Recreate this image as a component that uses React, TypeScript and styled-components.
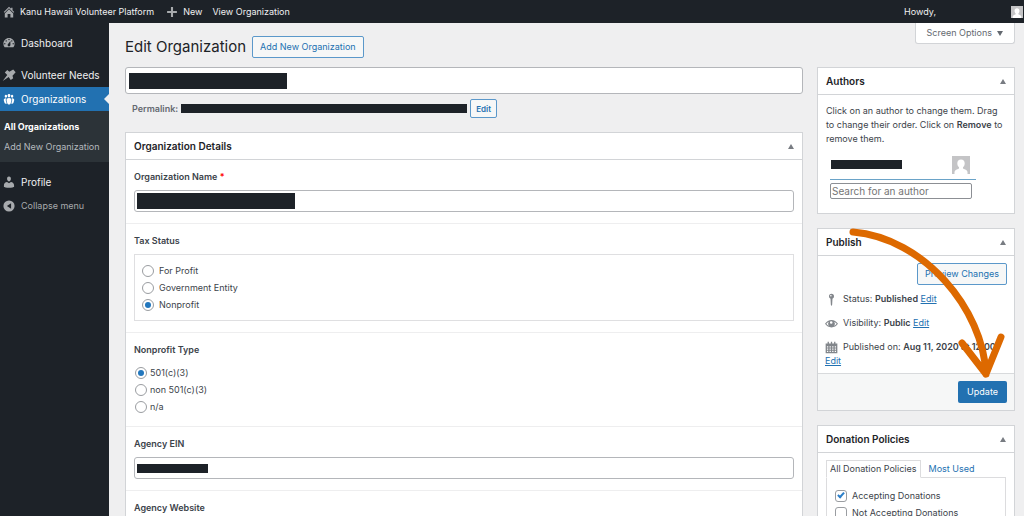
import React from "react";
import styled, { createGlobalStyle } from "styled-components";

const Global = createGlobalStyle`
  * { box-sizing: border-box; }
  html { scrollbar-width: none; }
  body {
    margin: 0;
    background: #efeff0;
    color: #3c434a;
    font: 10px/14px Inter, "Liberation Sans", sans-serif;
  }
  button, input { font: inherit; color: inherit; margin: 0; }
  h1, h2, h3, p, ul, fieldset { margin: 0; padding: 0; border: 0; }
  ul { list-style: none; }
  a { color: #2271b1; }
`;

const TopBar = styled.header`
  display: flex;
  align-items: center;
  height: 23px;
  padding: 0 1px 0 2px;
  background: #1d2228;
  color: #f0f0f1;
`;
const TopLink = styled.a<{ $gap?: number }>`
  display: flex;
  align-items: center;
  gap: 4px;
  margin-right: ${(p) => p.$gap ?? 0}px;
  color: inherit;
  font-size: 9px;
  text-decoration: none;
  svg { color: #a7aaad; }
`;
const Account = styled(TopLink)`
  margin-left: auto;
  gap: 75px;
`;
const Shell = styled.div`
  display: flex;
  min-height: calc(100vh - 23px);
`;
const Sidebar = styled.nav`
  flex: 0 0 109px;
  padding-top: 8px;
  background: #1d2228;
`;
const MenuItem = styled.a<{ $active?: boolean; $spaced?: boolean }>`
  position: relative;
  display: flex;
  align-items: center;
  gap: 5px;
  height: 24px;
  margin-top: ${(p) => (p.$spaced ? 8 : 0)}px;
  padding-left: 2px;
  background: ${(p) => (p.$active ? "#2271b1" : "transparent")};
  color: ${(p) => (p.$active ? "#fff" : "#f0f0f1")};
  text-decoration: none;
  white-space: nowrap;
  svg { color: ${(p) => (p.$active ? "#fff" : "#a7aaad")}; }
  &::after {
    content: "";
    display: ${(p) => (p.$active ? "block" : "none")};
    position: absolute;
    right: 0;
    top: 7px;
    border: 5px solid transparent;
    border-left: 0;
    border-right-color: #efeff0;
  }
`;
const Collapse = styled.button`
  display: flex;
  align-items: center;
  gap: 5px;
  height: 24px;
  padding: 0 0 0 2px;
  border: 0;
  background: none;
  color: #a7aaad;
  font-size: 9px;
`;
const SubMenu = styled.ul`
  padding: 6px 0 5px 4px;
  background: #2c3338;
`;
const SubLink = styled.a<{ $current?: boolean }>`
  display: block;
  color: ${(p) => (p.$current ? "#fff" : "#b4b9be")};
  font-size: 9px;
  font-weight: ${(p) => (p.$current ? 700 : 400)};
  line-height: 20px;
  text-decoration: none;
  white-space: nowrap;
`;
const Content = styled.main`
  flex: 1;
  min-width: 0;
  padding: 0 9px 0 16px;
`;
const PageHead = styled.div`
  display: flex;
  align-items: flex-start;
  height: 44px;
`;
const Title = styled.h1`
  margin: 14px 6px 0 0;
  color: #1d2327;
  font-size: 15px;
  font-weight: 400;
  line-height: 20px;
`;
const Outline = styled.button<{ $small?: boolean }>`
  height: ${(p) => (p.$small ? 19 : 22)}px;
  padding: 0 ${(p) => (p.$small ? 5 : 7)}px;
  border: 1px solid #5b98ca;
  border-radius: 2px;
  background: #f6f7f7;
  color: #2271b1;
  font-size: ${(p) => (p.$small ? 8 : 9)}px;
  line-height: 14px;
  white-space: nowrap;
`;
const HeadAction = styled(Outline)`
  margin-top: 13px;
`;
const ScreenOptions = styled.button`
  display: flex;
  align-items: center;
  gap: 5px;
  height: 21px;
  margin-left: auto;
  padding: 0 11px;
  border: 1px solid #d2d4d7;
  border-top: 0;
  border-radius: 0 0 3px 3px;
  background: #fff;
  color: #646970;
  font-size: 9px;
`;
const Columns = styled.div`
  display: grid;
  grid-template-columns: minmax(0, 1fr) 198px;
  gap: 14px;
  align-items: start;
`;
const Redaction = styled.span<{ $w: number; $h: number }>`
  display: block;
  width: ${(p) => p.$w}px;
  height: ${(p) => p.$h}px;
  background: #1d2228;
`;
const FieldRedaction = styled(Redaction)`
  position: absolute;
  left: 3px;
`;
const FieldBox = styled.div<{ $tall?: boolean }>`
  position: relative;
  display: flex;
  align-items: center;
  input {
    width: 100%;
    height: ${(p) => (p.$tall ? 27 : 22)}px;
    padding: 0 5px;
    border: 1px solid #b4b6ba;
    border-radius: 3px;
    background: #fff;
  }
  ${FieldRedaction} { left: ${(p) => (p.$tall ? 4 : 3)}px; }
`;
const Permalink = styled.div`
  display: flex;
  align-items: center;
  gap: 3px;
  margin: 5px 0 14px;
  padding-left: 7px;
  color: #646970;
  font-size: 9px;
  font-weight: 600;
`;
const Panel = styled.section`
  position: relative;
  margin-bottom: 14px;
  border: 1px solid #d2d4d7;
  background: #fff;
`;
const PanelHead = styled.div`
  display: flex;
  align-items: center;
  justify-content: space-between;
  height: 27px;
  padding: 0 8px;
  border-bottom: 1px solid #d2d4d7;
  h2 {
    color: #1d2327;
    font-size: 10px;
    font-weight: 600;
  }
  button {
    display: flex;
    padding: 0;
    border: 0;
    background: none;
    color: #787c82;
  }
`;
const Field = styled.div`
  padding: 10px 8px 11px;
  border-bottom: 1px solid #eeeeef;
`;
const Label = styled.label`
  display: block;
  margin-bottom: 6px;
  font-size: 9px;
  font-weight: 600;
`;
const Required = styled.span`
  color: #f00;
`;
const Choices = styled.div<{ $boxed?: boolean }>`
  padding: ${(p) => (p.$boxed ? "7px" : "1px 0 0 1px")};
  border: ${(p) => (p.$boxed ? "1px solid #dfdfe1" : "0")};
  label { gap: ${(p) => (p.$boxed ? 5 : 3)}px; }
`;
const Choice = styled.label`
  display: flex;
  align-items: center;
  height: 17px;
  font-size: 9px;
  input {
    appearance: none;
    display: grid;
    place-items: center;
    width: 12px;
    height: 12px;
    border: 1px solid #9a9da1;
    background: #fff;
  }
  input[type="radio"] { border-radius: 50%; }
  input[type="radio"]:checked::before {
    content: "";
    width: 6px;
    height: 6px;
    border-radius: 50%;
    background: #2377bd;
  }
  input[type="checkbox"] { border-radius: 3px; }
  input[type="checkbox"]:checked::before {
    content: "";
    width: 2px;
    height: 5px;
    margin-bottom: 2px;
    border: solid #2b7fc9;
    border-width: 0 2px 2px 0;
    transform: rotate(42deg);
  }
`;
const AuthorBody = styled.div`
  padding: 9px 8px 14px;
  font-size: 9px;
  b { font-weight: 600; }
`;
const AuthorRow = styled.div`
  display: flex;
  align-items: center;
  justify-content: space-between;
  width: 146px;
  height: 27px;
  margin: 7px 0 3px 4px;
  padding: 0 6px 3px 1px;
  border-bottom: 1px solid #6aa3c8;
`;
const AuthorSearch = styled.input`
  display: block;
  width: 142px;
  height: 16px;
  margin-left: 4px;
  padding: 0 1px;
  border: 1px solid #8c8f94;
  border-radius: 2px;
  font-size: 10px;
  &::placeholder { color: #757575; opacity: 1; }
`;
const PublishBody = styled.div`
  padding: 7px 7px 5px;
  font-size: 9px;
`;
const PreviewRow = styled.div`
  display: flex;
  justify-content: flex-end;
  margin-bottom: 7px;
`;
const Meta = styled.p`
  margin-bottom: 10px;
  svg {
    margin-right: 5px;
    color: #82868b;
    vertical-align: -4px;
  }
  b { font-weight: 600; }
  &:last-child { margin-bottom: 0; }
`;
const PublishFoot = styled.div`
  display: flex;
  justify-content: flex-end;
  padding: 7px;
  border-top: 1px solid #d8dadc;
  background: #f6f7f7;
`;
const Primary = styled.button`
  height: 22px;
  padding: 0 9px;
  border: 0;
  border-radius: 2px;
  background: #2271b1;
  color: #fff;
  font-size: 9px;
`;
const Pointer = styled.svg`
  position: absolute;
  left: 0;
  top: 0;
  overflow: visible;
  pointer-events: none;
`;
const PolicyBody = styled.div`
  padding: 7px 8px 10px;
`;
const Tabs = styled.div`
  display: flex;
`;
const Tab = styled.button<{ $on?: boolean }>`
  height: 18px;
  margin-bottom: -1px;
  padding: 0 ${(p) => (p.$on ? 3 : 7)}px;
  border: 1px solid ${(p) => (p.$on ? "#dcdcde" : "transparent")};
  border-bottom-color: ${(p) => (p.$on ? "#fff" : "transparent")};
  background: ${(p) => (p.$on ? "#fff" : "none")};
  color: ${(p) => (p.$on ? "#3c434a" : "#2271b1")};
  font-size: 9px;
  line-height: 14px;
`;
const PolicyList = styled.div`
  padding: 9px 8px;
  border: 1px solid #dcdcde;
  label { gap: 5px; }
`;

const Icon = ({ size = 14, children }: { size?: number; children: React.ReactNode }) => (
  <svg width={size} height={size} viewBox="0 0 20 20" fill="currentColor" aria-hidden="true">
    {children}
  </svg>
);
const HomeIcon = () => (
  <Icon><path d="M16 8.500l1.500 1.500-1.100 1.100L10 4.600l-6.400 6.500L2.500 10 10 2.500l3 3V4h2v3.500zM10 6.200l6 5.900V18h-4v-5H8v5H4v-5.900z" /></Icon>
);
const PlusIcon = () => (
  <Icon><path d="M17 8.500v3h-5.500V17h-3v-5.500H3v-3h5.500V3h3v5.500z" /></Icon>
);
const DashboardIcon = () => (
  <Icon><path d="M3.760 16h12.480c1.100-1.370 1.760-3.110 1.760-5 0-4.420-3.580-8-8-8s-8 3.580-8 8c0 1.890.660 3.630 1.760 5zM10 4c.550 0 1 .450 1 1s-.450 1-1 1-1-.450-1-1 .450-1 1-1zM6 6c.550 0 1 .450 1 1s-.450 1-1 1-1-.450-1-1 .450-1 1-1zm8 0c.550 0 1 .450 1 1s-.450 1-1 1-1-.450-1-1 .450-1 1-1zm-5.370 5.550L12 7v6c0 1.100-.900 2-2 2s-2-.900-2-2c0-.570.240-1.080.630-1.450zM4 10c.550 0 1 .450 1 1s-.450 1-1 1-1-.450-1-1 .450-1 1-1zm12 0c.550 0 1 .450 1 1s-.450 1-1 1-1-.450-1-1 .450-1 1-1z" fillRule="evenodd" /></Icon>
);
const PinIcon = () => (
  <Icon><path d="M1 18.500L7.500 10 4 6.500 7.500 3l3 2.500L16 2l3.500 4-4.500 5 1 3.500-3.500 2.500-3-4z" /></Icon>
);
const GroupsIcon = () => (
  <Icon><path d="M8.030 4.460c-.290 1.280.550 3.460 1.970 3.460 1.410 0 2.250-2.180 1.960-3.460-.220-.980-1.080-1.630-1.960-1.630-.890 0-1.740.650-1.970 1.630zm-4.130.900c-.250 1.080.470 2.930 1.670 2.930s1.920-1.850 1.670-2.930c-.190-.830-.920-1.390-1.670-1.390s-1.480.560-1.670 1.390zm8.860 0c-.250 1.080.470 2.930 1.660 2.930 1.200 0 1.920-1.850 1.670-2.930-.190-.830-.920-1.390-1.670-1.390-.740 0-1.470.560-1.660 1.390zm-.590 11.430l1.250-4.300C14.200 10 12.710 8.470 10 8.470c-2.720 0-4.210 1.530-3.440 4.020l1.260 4.300C8.050 17.510 9 18 10 18c.980 0 1.940-.490 2.170-1.210zm-6.100-7.630c-.490.670-.960 1.830-.420 3.590l1.120 3.790c-.340.200-.770.310-1.200.310-.850 0-1.650-.410-1.850-1.030l-1.070-3.650c-.650-2.110.610-3.400 2.920-3.400.27 0 .540.020.790.060-.100.100-.200.220-.290.330zm8.350-.390c2.310 0 3.580 1.290 2.920 3.400l-1.070 3.650c-.200.620-1 1.030-1.850 1.030-.430 0-.860-.110-1.200-.310l1.110-3.770c.550-1.780.080-2.940-.420-3.610-.080-.110-.180-.230-.280-.330.250-.040.510-.060.790-.060z" /></Icon>
);
const UserIcon = () => (
  <Icon><path d="M10 9.250c-2.270 0-2.730-3.440-2.730-3.440C7 4.020 7.820 2 9.970 2c2.160 0 2.980 2.020 2.710 3.810 0 0-.410 3.440-2.680 3.440zm0 2.570L12.720 10c2.390 0 4.520 2.330 4.520 4.530v2.490s-3.650 1.130-7.240 1.130c-3.650 0-7.240-1.130-7.240-1.130v-2.490c0-2.250 1.940-4.480 4.470-4.480z" /></Icon>
);
const CollapseIcon = () => (
  <Icon><path fillRule="evenodd" d="M10 2a8 8 0 1 1 0 16 8 8 0 0 1 0-16zM13 14V6l-6 4z" /></Icon>
);
const StatusIcon = () => (
  <Icon size={13}><path fillRule="evenodd" d="M10 1a4 4 0 0 1 1.500 7.700L11 18l-1 2-1-2-.5-9.300A4 4 0 0 1 10 1zm-1 2a1.200 1.200 0 1 0 .1 2.400A1.200 1.200 0 0 0 9 3z" /></Icon>
);
const EyeIcon = () => (
  <Icon size={13}><path fillRule="evenodd" d="M10 4.500c4 0 7.500 2.300 10 6-2.500 3.500-6 5.500-10 5.500S2.500 14 0 10.500c2.500-3.700 6-6 10-6zM5.700 7.300A11 11 0 0 0 2 10.500a10 10 0 0 0 4 3 5.300 5.300 0 0 1-.3-6.200zm8.600 0a5.300 5.300 0 0 1-.3 6.200 10 10 0 0 0 4-3 11 11 0 0 0-3.700-3.200zM9.500 6.500a2 2 0 1 0 .1 4 2 2 0 0 0-.1-4z" /></Icon>
);
const CalendarIcon = () => (
  <Icon size={13}><path fillRule="evenodd" d="M4 1h2v3h3V1h2v3h3V1h2v3h3v15H1V4h3zM3 8v2h2V8zm4 0v2h2V8zm4 0v2h2V8zm4 0v2h2V8zM3 11.500v2h2v-2zm4 0v2h2v-2zm4 0v2h2v-2zm4 0v2h2v-2zM3 15v2h2v-2zm4 0v2h2v-2zm4 0v2h2v-2zm4 0v2h2v-2z" /></Icon>
);
const Avatar = ({ size }: { size: number }) => (
  <svg width={size} height={size} viewBox="0 0 18 18" aria-hidden="true">
    <path fill="#c4c4c6" d="M0 0h18v18H0z" />
    <path fill="#fff" d="M9 3.500c2.300 0 3.700 1.500 3.700 3.800 0 1.800-.7 3.200-1.700 4v1.200c.9.600 3.600.9 4.500 3.200V18h-13v-2.300c.9-2.300 3.600-2.600 4.500-3.200v-1.200c-1-.8-1.700-2.200-1.700-4C5.300 5 6.700 3.500 9 3.500z" />
  </svg>
);
const Triangle = ({ down }: { down?: boolean }) => (
  <svg width="6" height="5" viewBox="0 0 6 5" fill="currentColor" aria-hidden="true">
    <path d={down ? "M0 0h6L3 5z" : "M3 0l3 5H0z"} />
  </svg>
);

const PanelTitle = ({ children }: { children: string }) => (
  <PanelHead>
    <h2>{children}</h2>
    <button type="button" aria-label={`Toggle panel: ${children}`}><Triangle /></button>
  </PanelHead>
);

const Radio = ({ name, children, checked }: { name: string; children: string; checked?: boolean }) => (
  <Choice>
    <input type="radio" name={name} defaultChecked={checked} />
    {children}
  </Choice>
);

export default function App() {
  return (
    <>
      <Global />
      <TopBar>
        <TopLink href="#site" $gap={11}><HomeIcon />Kanu Hawaii Volunteer Platform</TopLink>
        <TopLink href="#new" $gap={10}><PlusIcon />New</TopLink>
        <TopLink href="#view">View Organization</TopLink>
        <Account href="#account">Howdy, <Avatar size={12} /></Account>
      </TopBar>
      <Shell>
        <Sidebar>
          <MenuItem href="#dashboard"><DashboardIcon />Dashboard</MenuItem>
          <MenuItem href="#needs" $spaced><PinIcon />Volunteer Needs</MenuItem>
          <MenuItem href="#organizations" $active><GroupsIcon />Organizations</MenuItem>
          <SubMenu>
            <li><SubLink href="#all" $current>All Organizations</SubLink></li>
            <li><SubLink href="#add">Add New Organization</SubLink></li>
          </SubMenu>
          <MenuItem href="#profile" $spaced><UserIcon />Profile</MenuItem>
          <Collapse type="button"><CollapseIcon />Collapse menu</Collapse>
        </Sidebar>
        <Content>
          <PageHead>
            <Title>Edit Organization</Title>
            <HeadAction type="button">Add New Organization</HeadAction>
            <ScreenOptions type="button">Screen Options <Triangle down /></ScreenOptions>
          </PageHead>
          <Columns>
            <div>
              <FieldBox $tall>
                <input type="text" aria-label="Title" />
                <FieldRedaction $w={158} $h={16} />
              </FieldBox>
              <Permalink>
                Permalink: <Redaction $w={286} $h={9} />
                <Outline type="button" $small>Edit</Outline>
              </Permalink>
              <Panel>
                <PanelTitle>Organization Details</PanelTitle>
                <Field>
                  <Label htmlFor="org-name">Organization Name <Required>*</Required></Label>
                  <FieldBox>
                    <input id="org-name" type="text" />
                    <FieldRedaction $w={158} $h={16} />
                  </FieldBox>
                </Field>
                <Field role="radiogroup" aria-labelledby="tax-status">
                  <Label as="div" id="tax-status">Tax Status</Label>
                  <Choices $boxed>
                    <Radio name="tax">For Profit</Radio>
                    <Radio name="tax">Government Entity</Radio>
                    <Radio name="tax" checked>Nonprofit</Radio>
                  </Choices>
                </Field>
                <Field role="radiogroup" aria-labelledby="nonprofit-type">
                  <Label as="div" id="nonprofit-type">Nonprofit Type</Label>
                  <Choices>
                    <Radio name="type" checked>501(c)(3)</Radio>
                    <Radio name="type">non 501(c)(3)</Radio>
                    <Radio name="type">n/a</Radio>
                  </Choices>
                </Field>
                <Field>
                  <Label htmlFor="ein">Agency EIN</Label>
                  <FieldBox>
                    <input id="ein" type="text" />
                    <FieldRedaction $w={71} $h={9} />
                  </FieldBox>
                </Field>
                <Field>
                  <Label htmlFor="website">Agency Website</Label>
                  <FieldBox><input id="website" type="text" /></FieldBox>
                </Field>
              </Panel>
            </div>
            <aside>
              <Panel>
                <PanelTitle>Authors</PanelTitle>
                <AuthorBody>
                  <p>Click on an author to change them. Drag to change their order. Click on <b>Remove</b> to remove them.</p>
                  <AuthorRow><Redaction $w={71} $h={9} /><Avatar size={18} /></AuthorRow>
                  <AuthorSearch type="text" aria-label="Search for an author" placeholder="Search for an author" />
                </AuthorBody>
              </Panel>
              <Panel>
                <PanelTitle>Publish</PanelTitle>
                <PublishBody>
                  <PreviewRow><Outline type="button">Preview Changes</Outline></PreviewRow>
                  <Meta><StatusIcon />Status: <b>Published</b> <a href="#status">Edit</a></Meta>
                  <Meta><EyeIcon />Visibility: <b>Public</b> <a href="#visibility">Edit</a></Meta>
                  <Meta><CalendarIcon />Published on: <b>Aug 11, 2020 at 12:00</b> <a href="#date">Edit</a></Meta>
                </PublishBody>
                <PublishFoot><Primary type="button">Update</Primary></PublishFoot>
                <Pointer width="198" height="183" viewBox="0 0 198 183" fill="none" stroke="#dd6900" strokeWidth="7" strokeLinecap="round" strokeLinejoin="round" aria-hidden="true">
                  <path d="M35 3C106 9 165 80 168 145M144 114l24 31 15-37" />
                </Pointer>
              </Panel>
              <Panel>
                <PanelTitle>Donation Policies</PanelTitle>
                <PolicyBody>
                  <Tabs>
                    <Tab type="button" $on>All Donation Policies</Tab>
                    <Tab type="button">Most Used</Tab>
                  </Tabs>
                  <PolicyList>
                    <Choice><input type="checkbox" defaultChecked />Accepting Donations</Choice>
                    <Choice><input type="checkbox" />Not Accepting Donations</Choice>
                  </PolicyList>
                </PolicyBody>
              </Panel>
            </aside>
          </Columns>
        </Content>
      </Shell>
    </>
  );
}
